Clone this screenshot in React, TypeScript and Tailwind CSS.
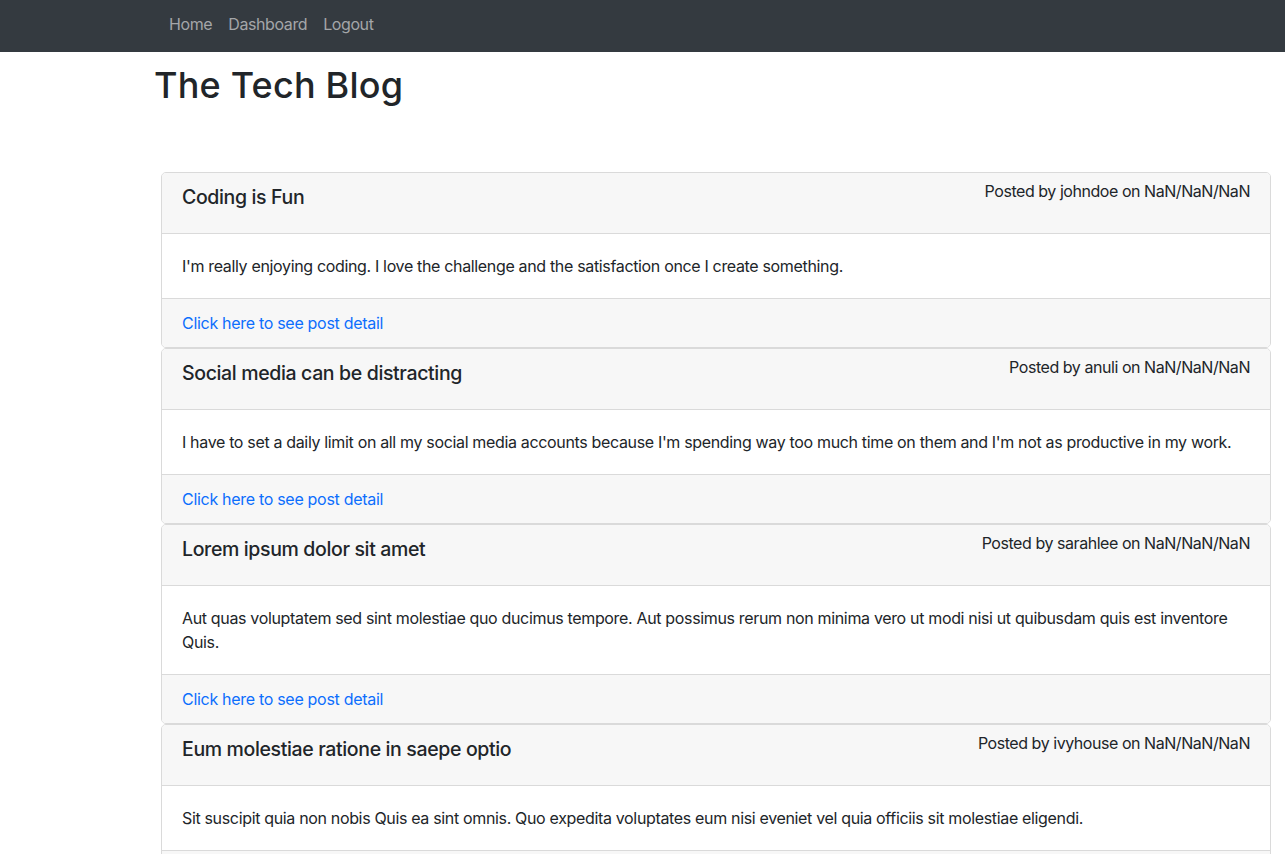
import React from "react";

const posts = [
  {
    title: "Coding is Fun",
    user: "johndoe",
    body: "I'm really enjoying coding. I love the challenge and the satisfaction once I create something.",
  },
  {
    title: "Social media can be distracting",
    user: "anuli",
    body: "I have to set a daily limit on all my social media accounts because I'm spending way too much time on them and I'm not as productive in my work.",
  },
  {
    title: "Lorem ipsum dolor sit amet",
    user: "sarahlee",
    body: "Aut quas voluptatem sed sint molestiae quo ducimus tempore. Aut possimus rerum non minima vero ut modi nisi ut quibusdam quis est inventore Quis.",
  },
  {
    title: "Eum molestiae ratione in saepe optio",
    user: "ivyhouse",
    body: "Sit suscipit quia non nobis Quis ea sint omnis. Quo expedita voluptates eum nisi eveniet vel quia officiis sit molestiae eligendi.",
  },
];

export default function App() {
  return (
    <div
      className="min-h-screen bg-white text-[#212529] text-base leading-6"
      style={{ fontFamily: 'Inter, "Noto Sans", sans-serif' }}
    >
      <nav className="h-[52px] bg-[#343a40] flex items-center pb-[4px] pl-[161px] tracking-[-0.4px]">
        <a className="px-2 text-[#a4a6a9]" href="#">Home</a>
        <a className="px-2 text-[#a4a6a9]" href="#">Dashboard</a>
        <a className="px-2 text-[#a4a6a9]" href="#">Logout</a>
      </nav>
      <h1 className="pl-[154px] mt-[9px] text-[36px] leading-[48px] font-medium tracking-[0.2px]">
        The Tech Blog
      </h1>
      <div className="pl-[161px] pr-[14px] mt-[63px]">
        {posts.map((p) => (
          <div key={p.title} className="border border-[#dadada] rounded-[5px] overflow-hidden">
            <div className="h-[61px] bg-[#f7f7f7] border-b border-[#dadada] px-5 pt-[6px] flex justify-between items-start">
              <h5 className="mt-[6px] text-[19.5px] leading-6 font-medium tracking-[-0.36px]">{p.title}</h5>
              <span className="tracking-[-0.45px]">Posted by {p.user} on NaN/NaN/NaN</span>
            </div>
            <div className="p-5 tracking-[-0.34px]">{p.body}</div>
            <div className="bg-[#f7f7f7] border-t border-[#dadada] px-5 py-3">
              <a href="#" className="text-[#0d6efd] tracking-[-0.3px]">Click here to see post detail</a>
            </div>
          </div>
        ))}
      </div>
    </div>
  );
}
